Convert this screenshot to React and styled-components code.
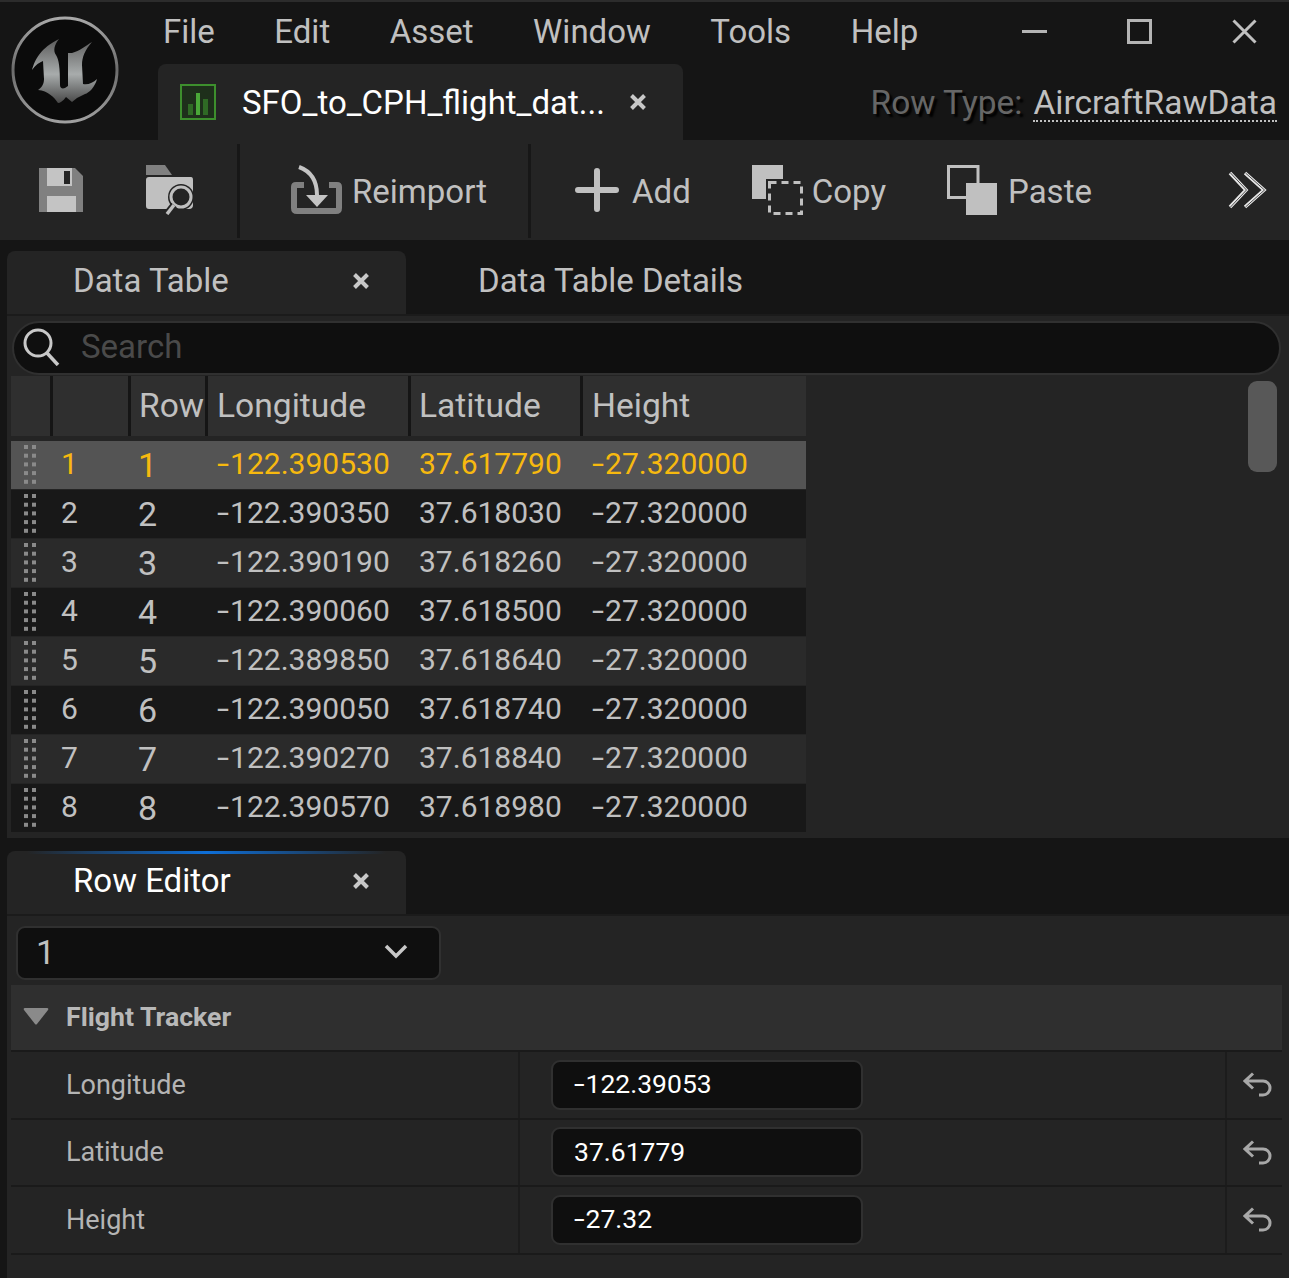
import React from 'react';
import styled, { createGlobalStyle } from 'styled-components';

const GlobalStyle = createGlobalStyle`
  html, body {
    margin: 0;
    padding: 0;
    background: #151515;
  }
  * {
    box-sizing: border-box;
  }
`;

const Page = styled.div`
  width: 1289px;
  height: 1278px;
  overflow: hidden;
  background: #151515;
  font-family: Roboto, "Liberation Sans", sans-serif;
  color: #c0c0c0;
  display: flex;
  flex-direction: column;
`;

const TitleBar = styled.div`
  height: 140px;
  flex: none;
  display: flex;
  border-top: 2px solid #2c2c2c;
`;

const LogoBox = styled.div`
  width: 158px;
  flex: none;
  padding: 14px 0 0 11px;
`;

const TitleRight = styled.div`
  flex: 1;
  display: flex;
  flex-direction: column;
`;

const MenuRow = styled.div`
  height: 62px;
  flex: none;
  display: flex;
  align-items: center;
  padding: 0 32px 3px 5px;
`;

const MenuItem = styled.div`
  font-size: 33px;
  margin-right: 59.5px;
  line-height: 1;
`;

const WindowButtons = styled.div`
  margin-left: auto;
  display: flex;
  align-items: center;
  gap: 80px;
`;

const TabRow = styled.div`
  flex: 1;
  display: flex;
  align-items: flex-end;
  justify-content: space-between;
  padding-right: 12px;
`;

const DocTab = styled.div`
  width: 525px;
  height: 76px;
  background: #242424;
  border-radius: 8px 8px 0 0;
  display: flex;
  align-items: center;
  padding-left: 22px;
`;

const DocTitle = styled.div`
  font-size: 33px;
  color: #fff;
  margin-left: 26px;
  width: 387px;
  white-space: nowrap;
`;

const RowType = styled.div`
  display: flex;
  align-items: center;
  gap: 11px;
  font-size: 33.5px;
  height: 76px;
`;

const RowTypeLabel = styled.span`
  color: #666;
  text-shadow: 3px 3px 2px #000;
`;

const RowTypeValue = styled.span`
  border-bottom: 2px dotted #c0c0c0;
  line-height: 34px;
  margin-top: 4px;
`;

const Toolbar = styled.div`
  height: 100px;
  flex: none;
  background: #242424;
  display: flex;
  align-items: stretch;
`;

const ToolGroup = styled.div`
  width: ${(p) => p.$width}px;
  flex: ${(p) => (p.$grow ? 1 : 'none')};
  padding-left: ${(p) => p.$left}px;
  padding-right: ${(p) => (p.$grow ? 21 : 0)}px;
  display: flex;
  align-items: center;
  gap: ${(p) => p.$gap || 0}px;
`;

const ToolSeparator = styled.div`
  width: 3px;
  flex: none;
  background: #171717;
  margin: 4px 0 2px;
`;

const ToolButton = styled.div`
  display: flex;
  align-items: center;
  gap: ${(p) => p.$gap || 10}px;
  font-size: 33px;
`;

const ToolLabel = styled.span`
  position: relative;
  top: 1px;
`;

const MoreButton = styled.div`
  margin-left: auto;
  display: flex;
`;

const TabStrip = styled.div`
  height: 74px;
  flex: none;
  padding: 11px 0 0 7px;
  display: flex;
  align-items: stretch;
`;

const PanelTab = styled.div`
  position: relative;
  width: 399px;
  background: #242424;
  border-radius: 8px 8px 0 0;
  display: flex;
  align-items: center;
  justify-content: space-between;
  padding: 0 36px 4px 66px;
  font-size: 33px;
  color: ${(p) => (p.$active ? '#fff' : '#c0c0c0')};
`;

const TabAccent = styled.div`
  position: absolute;
  left: 20px;
  right: 20px;
  top: 0;
  height: 3px;
  background: linear-gradient(90deg, rgba(14, 105, 205, 0), #0e6fd8 50%, rgba(14, 105, 205, 0));
`;

const PlainTab = styled.div`
  font-size: 33px;
  padding: 0 0 4px 72px;
  display: flex;
  align-items: center;
`;

const TablePanel = styled.div`
  height: 524px;
  flex: none;
  margin-left: 7px;
  background: #242424;
  border-top: 2px solid #1b1b1b;
  padding: 5px 8px 0 4px;
  overflow: hidden;
`;

const SearchBar = styled.div`
  height: 54px;
  margin: 0 0 1px 1px;
  background: #0f0f0f;
  border: 2px solid #303030;
  border-radius: 27px;
  display: flex;
  align-items: center;
  padding: 0 0 3px 8px;
`;

const SearchText = styled.span`
  font-size: 33px;
  color: #4a4a4a;
  margin-left: 21px;
`;

const TableArea = styled.div`
  display: flex;
  justify-content: space-between;
`;

const DataGrid = styled.div`
  width: 795px;
  display: flex;
  flex-direction: column;
  gap: 1px;
`;

const HeaderRow = styled.div`
  height: 60px;
  margin-bottom: 4px;
  display: grid;
  grid-template-columns: 42px 78px 77px 203px 172px 1fr;
  background: #151515;
`;

const HeaderCell = styled.div`
  background: #2f2f2f;
  margin-right: 3px;
  font-size: 33.6px;
  display: flex;
  align-items: center;
  padding-left: ${(p) => p.$left || 9}px;
  padding-bottom: 2px;
  white-space: nowrap;
  overflow: hidden;
  &:last-child {
    margin-right: 0;
  }
`;

const DataRow = styled.div`
  height: 48px;
  display: grid;
  grid-template-columns: 42px 78px 77px 202px 173px 1fr;
  align-items: center;
  font-size: 30px;
  background: ${(p) => (p.$selected ? '#545454' : p.$even ? '#181818' : '#2a2a2a')};
  color: ${(p) => (p.$selected ? '#f7b90f' : '#c0c0c0')};
`;

const HandleCell = styled.div`
  display: flex;
  justify-content: center;
  padding-right: 4px;
`;

const IndexCell = styled.div`
  padding: 0 0 3px 8px;
  font-size: 30px;
`;

const RowNumberCell = styled.div`
  padding-left: 7px;
  font-size: 34px;
`;

const ValueCell = styled.div`
  padding: 0 0 4px 9px;
  white-space: nowrap;
`;

// the hyphen in the reference is wider than Roboto's
const Minus = styled.span`
  display: inline-block;
  transform: scaleX(1.45);
  transform-origin: left center;
  margin-right: 0.16em;
`;

const ScrollThumb = styled.div`
  width: 29px;
  height: 91px;
  margin: 5px 4px 0 0;
  background: #585858;
  border-radius: 9px;
`;

const GapBand = styled.div`
  height: 13px;
  flex: none;
`;

const RowStrip = styled.div`
  height: 63px;
  flex: none;
  padding-left: 7px;
  display: flex;
  align-items: stretch;
`;

const EditorPanel = styled.div`
  flex: 1;
  margin-left: 7px;
  background: #242424;
  border-top: 2px solid #1b1b1b;
  padding: 10px 7px 0 4px;
`;

const Combo = styled.div`
  width: 425px;
  height: 54px;
  margin-left: 5px;
  background: #0f0f0f;
  border: 2px solid #303030;
  border-radius: 9px;
  display: flex;
  align-items: center;
  justify-content: space-between;
  padding: 0 31px 3px 18px;
  font-size: 34px;
`;

const SectionHeader = styled.div`
  height: 67px;
  margin-top: 5px;
  background: #2f2f2f;
  border-bottom: 2px solid #1a1a1a;
  display: flex;
  align-items: center;
  gap: 17px;
  padding: 0 0 2px 12px;
  font-size: 26.7px;
  font-weight: 700;
  color: #b8b8b8;
`;

const PropertyRow = styled.div`
  height: 67.6px;
  display: grid;
  grid-template-columns: 509px 707px 1fr;
  border-bottom: 2px solid #1a1a1a;
`;

const PropertyName = styled.div`
  display: flex;
  align-items: center;
  padding-left: 55px;
  font-size: 27px;
  color: #b4b4b4;
  border-right: 2px solid #1c1c1c;
`;

const PropertyValue = styled.div`
  display: flex;
  align-items: center;
  padding-left: 31px;
  border-right: 2px solid #1c1c1c;
`;

const NumberInput = styled.div`
  width: 312px;
  height: 50px;
  background: #0f0f0f;
  border: 2px solid #303030;
  border-radius: 9px;
  display: flex;
  align-items: center;
  padding: 0 0 2px 21px;
  font-size: 26.5px;
  color: #fff;
  white-space: pre;
`;

const ResetCell = styled.div`
  display: flex;
  align-items: center;
  padding-left: 16px;
`;

const UnrealLogo = () => (
  <svg width="108" height="108" viewBox="11 15 108 108">
    <defs>
      <linearGradient id="ring" x1="0" y1="0" x2="0" y2="1">
        <stop offset="0" stopColor="#a8a8a8" />
        <stop offset="0.5" stopColor="#6c6c6c" />
        <stop offset="1" stopColor="#a0a0a0" />
      </linearGradient>
      <linearGradient id="letter" x1="0" y1="0" x2="0" y2="1">
        <stop offset="0" stopColor="#5c5c5c" />
        <stop offset="0.55" stopColor="#a8acac" />
        <stop offset="1" stopColor="#484848" />
      </linearGradient>
    </defs>
    <circle cx="65" cy="69" r="52" fill="#0b0b0b" stroke="url(#ring)" strokeWidth="3" />
    <path
      fill="url(#letter)"
      d="M32 69 C35 58 41 47 59 38 C54 44 53 50 56 54 C59 59 60 66 60 84 C60 87 62 88 65 87 L68 85 L68 52 L72 52 C80 50 85 45 92 41 C85 49 82 56 82 64 L83 83 C88 84 93 82 97 78 C95 86 89 92 85 93 L77 97 L72 101 L66 96 C63 100 60 102 58 102 C54 96 48 90 38 89 C41 87 44 84 44 78 L43 60 C40 61 35 64 32 69 Z"
    />
  </svg>
);

const MinimizeIcon = () => (
  <svg width="25" height="3" viewBox="0 0 25 3">
    <rect width="25" height="3" fill="#b4b4b4" />
  </svg>
);

const MaximizeIcon = () => (
  <svg width="25" height="25" viewBox="0 0 25 25">
    <rect x="1.5" y="1.5" width="22" height="22" fill="none" stroke="#b4b4b4" strokeWidth="3" />
  </svg>
);

const WindowCloseIcon = () => (
  <svg width="25" height="25" viewBox="0 0 25 25">
    <path d="M1.5 1.5 L23.5 23.5 M23.5 1.5 L1.5 23.5" stroke="#c0c0c0" strokeWidth="3" />
  </svg>
);

const TableAssetIcon = () => (
  <svg width="36" height="36" viewBox="0 0 36 36">
    <rect x="1" y="1" width="34" height="34" fill="#1e2f1b" stroke="#3d8f2d" strokeWidth="2" />
    <rect x="8" y="20" width="5" height="11" fill="#2f6a25" />
    <rect x="16" y="9" width="4" height="22" fill="#4aa838" />
    <rect x="23" y="15" width="5" height="16" fill="#2f6a25" />
  </svg>
);

const CloseIcon = () => (
  <svg width="18" height="18" viewBox="0 0 18 18">
    <path d="M2.5 2.5 L15.5 15.5 M15.5 2.5 L2.5 15.5" stroke="#c8c8c8" strokeWidth="4" />
  </svg>
);

const SaveIcon = () => (
  <svg width="44" height="44" viewBox="0 0 44 44">
    <path d="M0 0 H36 L44 8 V44 H0 Z" fill="#808080" />
    <rect x="8" width="25" height="18" fill="#c4c4c4" />
    <rect x="25" y="3" width="6" height="13" fill="#242424" />
    <rect x="8" y="28" width="29" height="16" fill="#c4c4c4" />
  </svg>
);

const FolderSearchIcon = () => (
  <svg width="50" height="50" viewBox="0 0 50 50">
    <path d="M1 0 H20 L27 10 H1 Z" fill="#808080" />
    <path d="M1 15 Q1 12 4 12 H46 Q48 12 48 15 V40 Q48 44 44 44 H4 Q1 44 1 41 Z" fill="#c0c0c0" />
    <circle cx="36" cy="32" r="13" fill="#242424" />
    <circle cx="36" cy="32" r="10" fill="none" stroke="#c0c0c0" strokeWidth="3" />
    <path d="M29 40 L22 49" stroke="#242424" strokeWidth="7" />
    <path d="M29 40 L22 49" stroke="#c0c0c0" strokeWidth="3.5" />
  </svg>
);

const ReimportIcon = () => (
  <svg width="52" height="50" viewBox="0 0 52 50">
    <path d="M14 20 H6 Q4 20 4 22 V43 Q4 46 7 46 H46 Q49 46 49 43 V22 Q49 20 47 20 H39" fill="none" stroke="#808080" strokeWidth="6" />
    <path d="M9 2 C20 6 27 14 27 30" fill="none" stroke="#c4c4c4" strokeWidth="4" />
    <path d="M16 30 H38 L27 42 Z" fill="#c4c4c4" />
  </svg>
);

const PlusIcon = () => (
  <svg width="44" height="44" viewBox="0 0 44 44">
    <path d="M3 22 H41 M22 3 V41" stroke="#c0c0c0" strokeWidth="6" strokeLinecap="round" />
  </svg>
);

const CopyIcon = () => (
  <svg width="51" height="50" viewBox="0 0 51 50">
    <path d="M0 0 H31 V14 H14 V34 H0 Z" fill="#c0c0c0" />
    <rect x="17.5" y="17.5" width="32" height="31" fill="none" stroke="#c0c0c0" strokeWidth="3" strokeDasharray="7 5" />
  </svg>
);

const PasteIcon = () => (
  <svg width="50" height="50" viewBox="0 0 50 50">
    <path d="M19 32.5 H1.5 V1.5 H31 V18" fill="none" stroke="#c0c0c0" strokeWidth="3" />
    <rect x="19" y="18" width="31" height="32" fill="#c0c0c0" />
  </svg>
);

const MoreIcon = () => (
  <svg width="40" height="38" viewBox="0 0 40 38">
    <path d="M2 2 L18 19 L2 36 M17 2 L36 19 L17 36" fill="none" stroke="#e8e8e8" strokeWidth="3.5" />
    <path d="M2.5 2 L18.5 19 L2.5 36 M17.5 2 L36.5 19 L17.5 36" fill="none" stroke="#242424" strokeWidth="0.8" />
  </svg>
);

const SearchIcon = () => (
  <svg width="38" height="38" viewBox="0 0 38 38">
    <circle cx="16" cy="15" r="13" fill="none" stroke="#c8c8c8" strokeWidth="3" />
    <path d="M25 25 L36 37" stroke="#c8c8c8" strokeWidth="3.5" />
  </svg>
);

const DragHandle = () => (
  <svg width="14" height="42" viewBox="0 0 14 42">
    {[0, 1, 2, 3, 4].map((r) => (
      <g key={r} fill="#8a8a8a">
        <rect x="1" y={1 + r * 8.7} width="4" height="4" />
        <rect x="9" y={1 + r * 8.7} width="4" height="4" />
      </g>
    ))}
  </svg>
);

const ChevronDownIcon = () => (
  <svg width="24" height="15" viewBox="0 0 24 15">
    <path d="M2 2 L12 12 L22 2" fill="none" stroke="#c8c8c8" strokeWidth="3.5" />
  </svg>
);

const CollapseIcon = () => (
  <svg width="26" height="17" viewBox="0 0 26 17">
    <path d="M1 2 Q0 0 2 0 H24 Q26 0 25 2 L14 16 Q13 17 12 16 Z" fill="#8a8a8a" />
  </svg>
);

const ResetIcon = () => (
  <svg width="29" height="25" viewBox="0 0 29 25">
    <path d="M10 1.5 L2 9 L10 16.5 M2 9 H20 A7 7 0 0 1 20 23 H16" fill="none" stroke="#a8a8a8" strokeWidth="3" />
  </svg>
);

const Signed = ({ value }) =>
  value.startsWith('-') ? (
    <>
      <Minus>-</Minus>
      {value.slice(1)}
    </>
  ) : (
    value
  );

const menuItems = ['File', 'Edit', 'Asset', 'Window', 'Tools', 'Help'];

const tableRows = [
  ['-122.390530', '37.617790'],
  ['-122.390350', '37.618030'],
  ['-122.390190', '37.618260'],
  ['-122.390060', '37.618500'],
  ['-122.389850', '37.618640'],
  ['-122.390050', '37.618740'],
  ['-122.390270', '37.618840'],
  ['-122.390570', '37.618980'],
];

const properties = [
  ['Longitude', '-122.39053'],
  ['Latitude', '37.61779'],
  ['Height', '-27.32'],
];

const App = () => {
  return (
    <Page>
      <GlobalStyle />
      <TitleBar>
        <LogoBox>
          <UnrealLogo />
        </LogoBox>
        <TitleRight>
          <MenuRow>
            {menuItems.map((item) => (
              <MenuItem key={item}>{item}</MenuItem>
            ))}
            <WindowButtons>
              <MinimizeIcon />
              <MaximizeIcon />
              <WindowCloseIcon />
            </WindowButtons>
          </MenuRow>
          <TabRow>
            <DocTab>
              <TableAssetIcon />
              <DocTitle>SFO_to_CPH_flight_dat...</DocTitle>
              <CloseIcon />
            </DocTab>
            <RowType>
              <RowTypeLabel>Row Type:</RowTypeLabel>
              <RowTypeValue>AircraftRawData</RowTypeValue>
            </RowType>
          </TabRow>
        </TitleRight>
      </TitleBar>

      <Toolbar>
        <ToolGroup $width={237} $left={39} $gap={62}>
          <SaveIcon />
          <FolderSearchIcon />
        </ToolGroup>
        <ToolSeparator />
        <ToolGroup $width={288} $left={50}>
          <ToolButton>
            <ReimportIcon />
            <ToolLabel>Reimport</ToolLabel>
          </ToolButton>
        </ToolGroup>
        <ToolSeparator />
        <ToolGroup $grow $left={44} $gap={61}>
          <ToolButton $gap={13}>
            <PlusIcon />
            <ToolLabel>Add</ToolLabel>
          </ToolButton>
          <ToolButton $gap={9}>
            <CopyIcon />
            <ToolLabel>Copy</ToolLabel>
          </ToolButton>
          <ToolButton $gap={11}>
            <PasteIcon />
            <ToolLabel>Paste</ToolLabel>
          </ToolButton>
          <MoreButton>
            <MoreIcon />
          </MoreButton>
        </ToolGroup>
      </Toolbar>

      <TabStrip>
        <PanelTab>
          Data Table
          <CloseIcon />
        </PanelTab>
        <PlainTab>Data Table Details</PlainTab>
      </TabStrip>

      <TablePanel>
        <SearchBar>
          <SearchIcon />
          <SearchText>Search</SearchText>
        </SearchBar>
        <TableArea>
          <DataGrid>
            <HeaderRow>
              <HeaderCell />
              <HeaderCell />
              <HeaderCell $left={8}>Row</HeaderCell>
              <HeaderCell>Longitude</HeaderCell>
              <HeaderCell $left={8}>Latitude</HeaderCell>
              <HeaderCell>Height</HeaderCell>
            </HeaderRow>
            {tableRows.map(([lon, lat], i) => (
              <DataRow key={lon} $selected={i === 0} $even={i % 2 === 1}>
                <HandleCell>
                  <DragHandle />
                </HandleCell>
                <IndexCell>{i + 1}</IndexCell>
                <RowNumberCell>{i + 1}</RowNumberCell>
                <ValueCell>
                  <Signed value={lon} />
                </ValueCell>
                <ValueCell>{lat}</ValueCell>
                <ValueCell>
                  <Signed value="-27.320000" />
                </ValueCell>
              </DataRow>
            ))}
          </DataGrid>
          <ScrollThumb />
        </TableArea>
      </TablePanel>

      <GapBand />

      <RowStrip>
        <PanelTab $active>
          <TabAccent />
          Row Editor
          <CloseIcon />
        </PanelTab>
      </RowStrip>

      <EditorPanel>
        <Combo>
          1
          <ChevronDownIcon />
        </Combo>
        <SectionHeader>
          <CollapseIcon />
          Flight Tracker
        </SectionHeader>
        {properties.map(([name, value]) => (
          <PropertyRow key={name}>
            <PropertyName>{name}</PropertyName>
            <PropertyValue>
              <NumberInput>
                <span>
                  <Signed value={value} />
                </span>
              </NumberInput>
            </PropertyValue>
            <ResetCell>
              <ResetIcon />
            </ResetCell>
          </PropertyRow>
        ))}
      </EditorPanel>
    </Page>
  );
};

export default App;
